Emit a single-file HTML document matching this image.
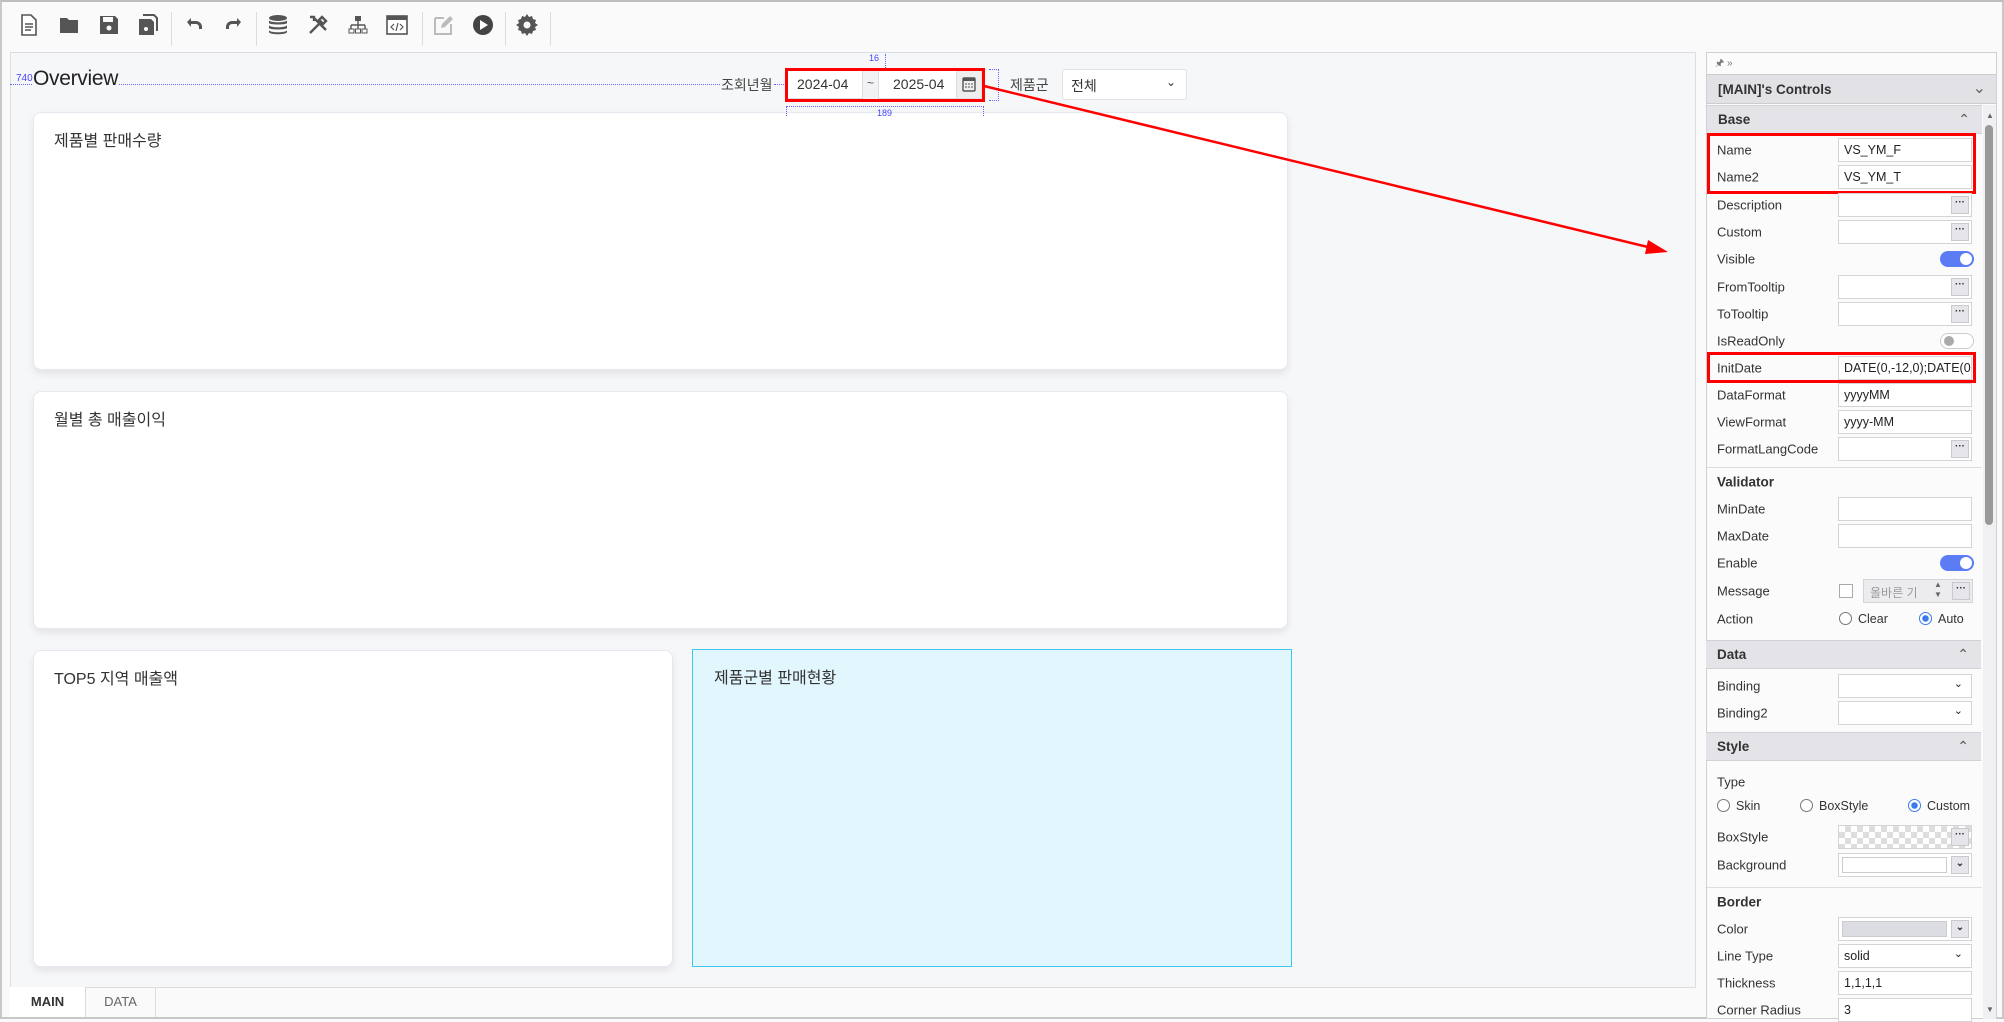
<!DOCTYPE html>
<html><head><meta charset="utf-8">
<style>
*{box-sizing:border-box;margin:0;padding:0}
body{width:2004px;height:1019px;position:relative;background:#fafafb;font-family:"Liberation Sans","Noto Sans CJK KR",sans-serif;overflow:hidden;color:#333}
.a{position:absolute}
.frame{left:0;top:0;width:2004px;height:1019px;border:2px solid #c8c8c8;border-top:2px solid #bdbdbd}
.tb svg{position:absolute;top:13px}
.sep{position:absolute;top:12px;width:1px;height:34px;background:#ddd}
.canvas{left:10px;top:52px;width:1686px;height:936px;background:#f6f7f9;border:1px solid #dcdde2}
.card{position:absolute;background:#fff;border:1px solid #e6e8ef;border-radius:8px;box-shadow:0 4px 8px rgba(0,0,0,0.08)}
.card span{position:absolute;left:20px;top:14px;font-size:16px;color:#333}
.panel{left:1706px;top:52px;width:291px;height:967px;background:#fbfbfc;border:1px solid #cfcfd4}
.lbl{position:absolute;left:11px;font-size:13px;color:#333;transform:translateY(-50%)}
.inp{position:absolute;left:132px;width:134px;height:24px;background:#fff;border:1px solid #d3d3d8;font-size:12.5px;padding:4px 5px;color:#222;transform:translateY(-50%);white-space:nowrap;overflow:hidden}
.dots{position:absolute;right:2px;top:2px;width:18px;height:18px;background:#e6e6ea;border:1px solid #c9c9ce;font-size:10px;text-align:center;line-height:12px;font-weight:bold;color:#333}
.sec{position:absolute;left:0;width:275px;height:29px;background:#e4e4e8;border-top:1px solid #d2d2d6;border-bottom:1px solid #d2d2d6;font-size:13.5px;font-weight:bold;padding:6px 11px;color:#333}
.sec i{position:absolute;right:12px;top:5px;font-style:normal;font-weight:normal;font-size:14px;color:#555}
.bold{position:absolute;left:11px;font-size:13.5px;font-weight:bold;transform:translateY(-50%)}
.tog{position:absolute;left:234px;width:34px;height:16px;border-radius:8px;transform:translateY(-50%)}
.radio{display:inline-block;width:13px;height:13px;border:1px solid #777;border-radius:50%;vertical-align:-2px;margin-right:6px;background:#fff}
.radio.on{border-color:#3a7bea;background:radial-gradient(circle,#3a7bea 0 3px,#fff 3.5px)}
.chev{position:absolute;right:8px;top:2px;font-size:11px}
</style></head><body>
<div class="a frame"></div>

<div class="tb">
<svg style="left:19px" width="20" height="24" viewBox="0 0 20 24"><path d="M3 2h9l5 5v15H3z" fill="#fff" stroke="#555" stroke-width="1.6"/><path d="M6 11h8M6 14h8M6 17h6" stroke="#555" stroke-width="1.4"/></svg>
<svg style="left:58px" width="24" height="24" viewBox="0 0 24 24"><path d="M2 5h7l2 2h9v13H2z" fill="#555"/></svg>
<svg style="left:98px" width="22" height="24" viewBox="0 0 22 24"><path d="M2 3h15l3 3v15H2z" fill="#555"/><rect x="5" y="4" width="10" height="5" fill="#fafafb"/><circle cx="11" cy="15" r="2.5" fill="#fafafb"/></svg>
<svg style="left:137px" width="22" height="24" viewBox="0 0 22 24"><path d="M6 2h11l3 3v13" fill="none" stroke="#555" stroke-width="2"/><path d="M2 6h12l3 3v13H2z" fill="#555"/><circle cx="9" cy="16" r="2" fill="#fafafb"/></svg>
<svg style="left:182px" width="24" height="24" viewBox="0 0 24 24"><path d="M5 9l4-4v3h5a6 6 0 016 6v2h-3v-2a3 3 0 00-3-3H9v3z" fill="#555"/></svg>
<svg style="left:222px" width="24" height="24" viewBox="0 0 24 24"><path d="M19 9l-4-4v3h-5a6 6 0 00-6 6v2h3v-2a3 3 0 013-3h5v3z" fill="#555"/></svg>
<svg style="left:267px" width="22" height="24" viewBox="0 0 22 24"><ellipse cx="11" cy="5" rx="9" ry="3" fill="#555"/><path d="M2 7v3c0 2 18 2 18 0V7c0 3-18 3-18 0zM2 12v3c0 2 18 2 18 0v-3c0 3-18 3-18 0zM2 17v2c0 3 18 3 18 0v-2c0 3-18 3-18 0z" fill="#555"/></svg>
<svg style="left:306px" width="24" height="24" viewBox="0 0 24 24"><path d="M4 20L16 8M7 4l13 13M4 4l4 0 0 4M16 4l4 4-3 3-4-4z" stroke="#555" stroke-width="2.4" fill="none"/></svg>
<svg style="left:347px" width="22" height="24" viewBox="0 0 22 24"><rect x="8" y="3" width="6" height="5" fill="#555"/><path d="M11 8v4M4 12h14M4 12v4M11 12v4M18 12v4" stroke="#555" stroke-width="1.4" fill="none"/><rect x="2" y="16" width="5" height="4" fill="none" stroke="#555"/><rect x="8.5" y="16" width="5" height="4" fill="none" stroke="#555"/><rect x="15" y="16" width="5" height="4" fill="none" stroke="#555"/></svg>
<svg style="left:386px" width="22" height="24" viewBox="0 0 22 24"><rect x="1" y="3" width="20" height="18" fill="#fff" stroke="#555" stroke-width="1.6"/><rect x="1" y="3" width="20" height="4" fill="#555"/><path d="M8 11l-3 3 3 3M14 11l3 3-3 3M12 10l-2 8" stroke="#555" stroke-width="1.2" fill="none"/></svg>
<svg style="left:432px" width="22" height="24" viewBox="0 0 22 24"><path d="M3 5h9M3 5v16h16V11" stroke="#bbb" stroke-width="2" fill="none"/><path d="M9 15l1-4 8-8 3 3-8 8z" fill="#bbb"/></svg>
<svg style="left:471px" width="24" height="24" viewBox="0 0 24 24"><circle cx="12" cy="12" r="10" fill="#444"/><path d="M9 7l8 5-8 5z" fill="#fff"/></svg>
<svg style="left:515px" width="24" height="24" viewBox="0 0 24 24"><path d="M12 1l2 3 3-1 1 3 3 1-1 3 3 2-3 2 1 3-3 1-1 3-3-1-2 3-2-3-3 1-1-3-3-1 1-3-3-2 3-2-1-3 3-1 1-3 3 1z" fill="#555"/><circle cx="12" cy="12" r="3.5" fill="#fafafb"/></svg>
<div class="sep" style="left:171px"></div><div class="sep" style="left:256px"></div><div class="sep" style="left:422px"></div><div class="sep" style="left:505px"></div><div class="sep" style="left:550px"></div>
</div>

<div class="a canvas">
 <div class="card" style="left:22px;top:59px;width:1255px;height:258px"><span>제품별 판매수량</span></div>
 <div class="card" style="left:22px;top:338px;width:1255px;height:238px"><span>월별 총 매출이익</span></div>
 <div class="card" style="left:22px;top:597px;width:640px;height:317px"><span>TOP5 지역 매출액</span></div>
 <div class="card" style="left:681px;top:596px;width:600px;height:318px;background:#e1f6fd;border:1px solid #3fc7ee;border-radius:0;box-shadow:none"><span style="left:21px;top:14px">제품군별 판매현황</span></div>
</div>
<div class="a" style="left:10px;top:84px;width:712px;border-top:1px dotted #6666ff"></div>
<div class="a" style="left:16px;top:73px;font-size:10px;color:#4444ff">740</div>
<div class="a" style="left:33px;top:67px;font-size:21px;color:#222;background:#f6f7f9;letter-spacing:-0.3px">Overview</div>
<div class="a" style="left:721px;top:75px;font-size:14px;color:#444;background:#f6f7f9">조회년월</div>
<div class="a" style="left:774px;top:84px;width:10px;border-top:1px dotted #6666ff"></div>
<div class="a" style="left:869px;top:53px;font-size:9px;color:#4444ff">16</div>
<div class="a" style="left:885px;top:54px;height:14px;border-left:1px dotted #6666ff"></div>
<div class="a" style="left:786px;top:106px;width:198px;height:10px;border:1px dotted #6666ff;border-bottom:none"></div>
<div class="a" style="left:877px;top:108px;font-size:9px;color:#4444ff">189</div>
<div class="a" style="left:989px;top:69px;width:10px;height:32px;border:1px dotted #6666ff;border-left:none"></div>
<div class="a" style="left:787px;top:70px;width:195px;height:29px;background:#fff;border:1px solid #ddd"></div>
<div class="a" style="left:797px;top:76px;font-size:14px">2024-04</div>
<div class="a" style="left:862px;top:70px;width:17px;height:29px;background:#f2f2f4;border-left:1px solid #ddd;border-right:1px solid #ddd;font-size:12px;text-align:center;line-height:27px;color:#555">~</div>
<div class="a" style="left:893px;top:76px;font-size:14px">2025-04</div>
<div class="a" style="left:956px;top:71px;width:25px;height:27px;background:#eee;border-left:1px solid #ddd"></div>
<svg class="a" style="left:962px;top:76px" width="14" height="16" viewBox="0 0 14 16"><rect x="1" y="2" width="12" height="13" rx="1" fill="none" stroke="#555" stroke-width="1.4"/><rect x="1" y="2" width="12" height="3" fill="#555"/><path d="M3 8h2M6 8h2M9 8h2M3 11h2M6 11h2M9 11h2" stroke="#555"/></svg>
<div class="a" style="left:785px;top:68px;width:200px;height:34px;border:3px solid #f00"></div>
<div class="a" style="left:1010px;top:75px;font-size:14px;color:#444">제품군</div>
<div class="a" style="left:1062px;top:69px;width:125px;height:31px;background:#fff;border:1px solid #e2e2e6;border-radius:3px;font-size:14px;padding:6px 8px">전체<span style="position:absolute;right:10px;top:5px;font-size:12px">⌄</span></div>
<svg class="a" style="left:0;top:0" width="2004" height="1019"><line x1="984" y1="86" x2="1652" y2="248" stroke="#f00" stroke-width="2.5"/><path d="M1668 252l-20 -12 -3 14z" fill="#f00"/></svg>

<div class="a" style="left:10px;top:987px;width:1686px;height:30px;background:#fafafb;border-top:1px solid #ddd"></div>
<div class="a" style="left:10px;top:987px;width:76px;height:30px;background:#fff;border-right:1px solid #ddd;font-size:13px;font-weight:bold;text-align:center;line-height:30px">MAIN</div>
<div class="a" style="left:86px;top:987px;width:70px;height:30px;border-right:1px solid #ddd;font-size:13px;color:#666;text-align:center;line-height:30px">DATA</div>

<div class="a panel">
 <div class="a" style="left:8px;top:3px;font-size:10px;color:#777">🖈 »</div>
 <div class="a" style="left:0;top:21px;width:289px;height:30px;background:#e2e2e6;border-top:1px solid #ccc;border-bottom:1px solid #ccc;font-size:13.5px;font-weight:bold;padding:7px 11px">[MAIN]'s Controls<span style="position:absolute;right:10px;top:3px;font-weight:normal;font-size:16px;color:#666">⌄</span></div>
 <div class="a" style="left:276px;top:52px;width:13px;height:914px;background:#f0f0f2"></div>
 <div class="a" style="left:278px;top:72px;width:8px;height:400px;background:#999;border-radius:4px"></div>
 <div class="a" style="left:279px;top:58px;font-size:8px;color:#666">▲</div>
 <div class="a" style="left:279px;top:952px;font-size:8px;color:#666">▼</div>
 <div class="sec" style="top:52px">Base<i>⌃</i></div>
</div>
<div class="a" style="left:1707px;top:133px;width:269px;height:61px;border:3px solid #f00"></div>
<div class="a" style="left:1707px;top:352px;width:269px;height:31px;border:3px solid #f00"></div>

<div class="a" style="left:1706px;top:0;width:291px;height:1019px">
 <div class="lbl" style="top:150px">Name</div><div class="inp" style="top:150px">VS_YM_F</div>
 <div class="lbl" style="top:177px">Name2</div><div class="inp" style="top:177px">VS_YM_T</div>
 <div class="lbl" style="top:205px">Description</div><div class="inp" style="top:205px"><div class="dots">···</div></div>
 <div class="lbl" style="top:232px">Custom</div><div class="inp" style="top:232px"><div class="dots">···</div></div>
 <div class="lbl" style="top:259px">Visible</div><div class="tog" style="top:259px;background:#5b7cf5"><div style="position:absolute;right:2px;top:2px;width:12px;height:12px;border-radius:50%;background:#fff"></div></div>
 <div class="lbl" style="top:287px">FromTooltip</div><div class="inp" style="top:287px"><div class="dots">···</div></div>
 <div class="lbl" style="top:314px">ToTooltip</div><div class="inp" style="top:314px"><div class="dots">···</div></div>
 <div class="lbl" style="top:341px">IsReadOnly</div><div class="tog" style="top:341px;background:#fff;border:1px solid #ccc"><div style="position:absolute;left:3px;top:2px;width:10px;height:10px;border-radius:50%;background:#aaa"></div></div>
 <div class="lbl" style="top:368px">InitDate</div><div class="inp" style="top:368px">DATE(0,-12,0);DATE(0,</div>
 <div class="lbl" style="top:395px">DataFormat</div><div class="inp" style="top:395px">yyyyMM</div>
 <div class="lbl" style="top:422px">ViewFormat</div><div class="inp" style="top:422px">yyyy-MM</div>
 <div class="lbl" style="top:449px">FormatLangCode</div><div class="inp" style="top:449px"><div class="dots">···</div></div>
 <div class="a" style="left:1px;top:467px;width:275px;border-top:1px solid #ddd"></div>
 <div class="bold" style="top:482px">Validator</div>
 <div class="lbl" style="top:509px">MinDate</div><div class="inp" style="top:509px"></div>
 <div class="lbl" style="top:536px">MaxDate</div><div class="inp" style="top:536px"></div>
 <div class="lbl" style="top:563px">Enable</div><div class="tog" style="top:563px;background:#5b7cf5"><div style="position:absolute;right:2px;top:2px;width:12px;height:12px;border-radius:50%;background:#fff"></div></div>
 <div class="lbl" style="top:591px">Message</div>
 <div class="a" style="left:133px;top:584px;width:14px;height:14px;border:1px solid #aaa;background:#fff"></div>
 <div class="a" style="left:157px;top:579px;width:110px;height:24px;background:#ececef;border:1px solid #d3d3d8;font-size:12px;color:#999;padding:4px 6px">올바른 기<span style="position:absolute;left:70px;top:0;font-size:8px;color:#666;line-height:10px">▲<br>▼</span><div class="dots" style="top:2px">···</div></div>
 <div class="lbl" style="top:619px">Action</div>
 <div class="a" style="left:133px;top:612px;font-size:12.5px"><span class="radio"></span>Clear</div>
 <div class="a" style="left:213px;top:612px;font-size:12.5px"><span class="radio on"></span>Auto</div>
 <div class="sec" style="top:640px">Data<i>⌃</i></div>
 <div class="lbl" style="top:686px">Binding</div><div class="inp" style="top:686px"><span class="chev">⌄</span></div>
 <div class="lbl" style="top:713px">Binding2</div><div class="inp" style="top:713px"><span class="chev">⌄</span></div>
 <div class="sec" style="top:732px">Style<i>⌃</i></div>
 <div class="lbl" style="top:782px">Type</div>
 <div class="a" style="left:11px;top:799px;font-size:12.5px"><span class="radio"></span>Skin</div>
 <div class="a" style="left:94px;top:799px;font-size:12.5px"><span class="radio"></span>BoxStyle</div>
 <div class="a" style="left:202px;top:799px;font-size:12.5px"><span class="radio on"></span>Custom</div>
 <div class="lbl" style="top:837px">BoxStyle</div><div class="inp" style="top:837px;background:repeating-conic-gradient(#ddd 0 25%,#fff 0 50%) 0 0/12px 12px"><div class="dots">···</div></div>
 <div class="lbl" style="top:865px">Background</div><div class="inp" style="top:865px"><div style="position:absolute;left:3px;top:3px;width:105px;height:16px;background:#fff;border:1px solid #ccc"></div><div class="dots" style="font-size:10px;line-height:14px">⌄</div></div>
 <div class="a" style="left:1px;top:887px;width:275px;border-top:1px solid #ddd"></div>
 <div class="bold" style="top:902px">Border</div>
 <div class="lbl" style="top:929px">Color</div><div class="inp" style="top:929px"><div style="position:absolute;left:3px;top:3px;width:105px;height:16px;background:#dcdde2;border:1px solid #ccc"></div><div class="dots" style="line-height:14px">⌄</div></div>
 <div class="lbl" style="top:956px">Line Type</div><div class="inp" style="top:956px">solid<span class="chev">⌄</span></div>
 <div class="lbl" style="top:983px">Thickness</div><div class="inp" style="top:983px">1,1,1,1</div>
 <div class="lbl" style="top:1010px">Corner Radius</div><div class="inp" style="top:1010px">3</div>
</div>
</body></html>
